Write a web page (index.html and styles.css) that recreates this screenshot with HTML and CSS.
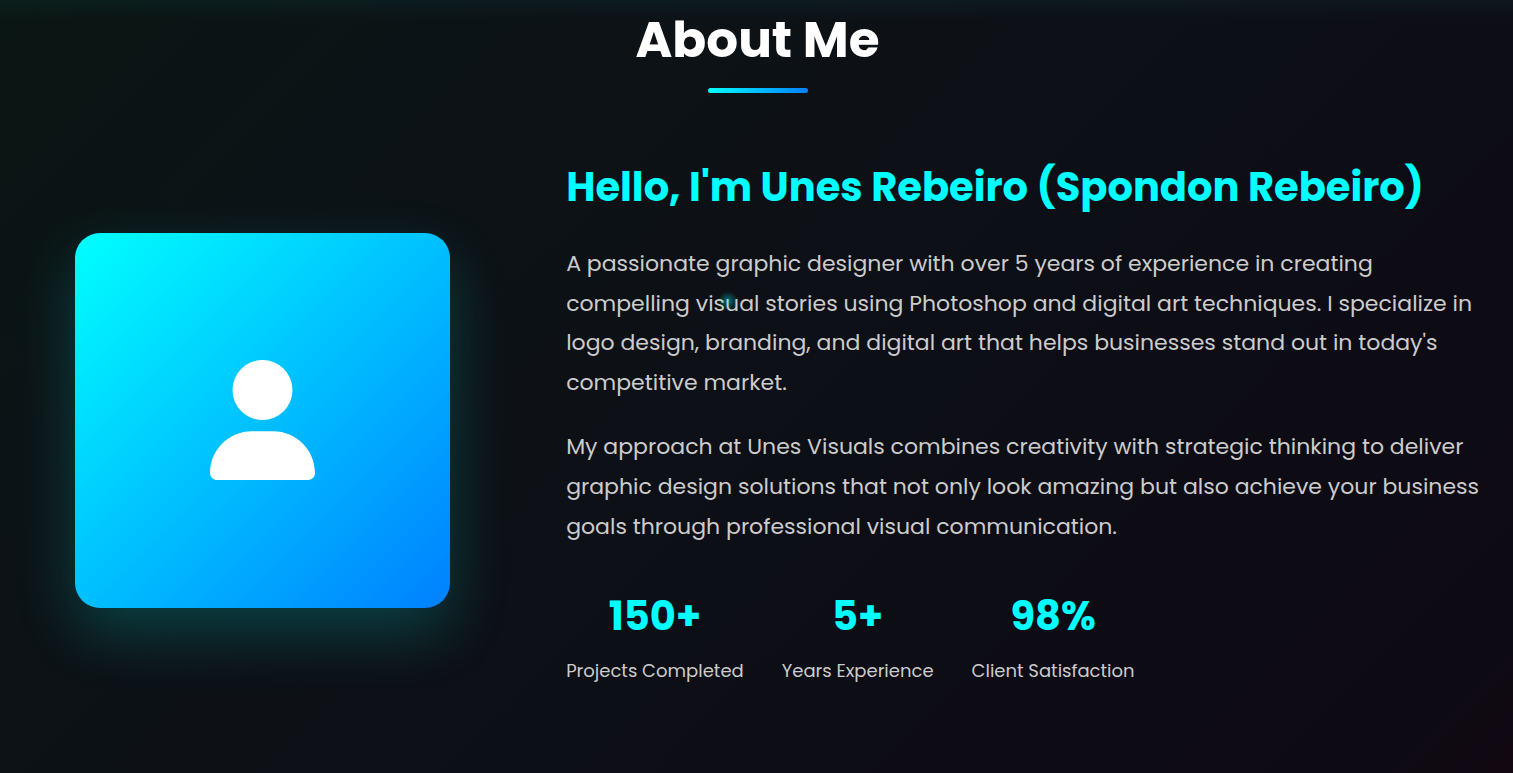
FILE: index.html
```html
<!DOCTYPE html>
<html lang="en">
<head>
<meta charset="utf-8">
<meta name="viewport" content="width=device-width, initial-scale=1">
<title>About Me</title>
<link rel="stylesheet" href="styles.css">
</head>
<body>
<section class="about" id="about">
  <div class="container">
    <h2 class="section-title">About Me</h2>
    <div class="about-content">
      <div class="about-image">
        <svg class="user-icon" viewBox="0 0 448 512" aria-hidden="true"><path d="M224 256A128 128 0 1 0 224 0a128 128 0 1 0 0 256zm-45.7 48C79.8 304 0 383.8 0 482.3C0 498.7 13.3 512 29.7 512H418.3c16.4 0 29.7-13.3 29.7-29.7C448 383.8 368.2 304 269.7 304H178.3z"/></svg>
      </div>
      <div class="about-text">
        <h3 class="greeting">Hello, I'm Unes Rebeiro (Spondon Rebeiro)</h3>
        <p class="bio">A passionate graphic designer with over 5 years of experience in creating compelling visual stories using Photoshop and digital art techniques. I specialize in logo design, branding, and digital art that helps businesses stand out in today's competitive market.</p>
        <p class="bio">My approach at Unes Visuals combines creativity with strategic thinking to deliver graphic design solutions that not only look amazing but also achieve your business goals through professional visual communication.</p>
        <div class="stats">
          <div class="stat"><span class="stat-number">150+</span><span class="stat-label">Projects Completed</span></div>
          <div class="stat"><span class="stat-number">5+</span><span class="stat-label">Years Experience</span></div>
          <div class="stat"><span class="stat-number">98%</span><span class="stat-label">Client Satisfaction</span></div>
        </div>
      </div>
    </div>
  </div>
</section>
<div class="cursor-glow" aria-hidden="true"></div>
</body>
</html>
```
FILE: styles.css
```css
* {
  box-sizing: border-box;
  margin: 0;
  padding: 0;
}

body {
  min-height: 100vh;
  background: #0a0a0f;
  color: #fff;
  font-family: Poppins, Inter, sans-serif;
}

.about {
  min-height: 100vh;
  padding: 10px 0 60px;
  background:
    linear-gradient(180deg, rgba(0, 255, 255, 0.04), rgba(0, 255, 255, 0) 20px),
    linear-gradient(135deg, #0a1613 0%, #0c1316 20%, #0d1016 50%, #0d0c15 75%, #0e0a13 94%, #120812 100%);
}

.container {
  max-width: 1500px;
  margin: 0 auto;
  padding: 0 25px 0 27px;
}

.section-title {
  display: flex;
  flex-direction: column;
  align-items: center;
  gap: 18px;
  margin-bottom: 62px;
  font-size: 50px;
  font-weight: 700;
  line-height: 60px;
}

.section-title::after {
  content: "";
  width: 100px;
  height: 5px;
  border-radius: 3px;
  background: linear-gradient(90deg, #00ffff, #0080ff);
}

.about-content {
  display: grid;
  grid-template-columns: 1fr 2fr;
  gap: 75px;
  align-items: center;
}

.about-image {
  display: flex;
  align-items: center;
  justify-content: center;
  justify-self: center;
  width: 100%;
  max-width: 375px;
  aspect-ratio: 1;
  border-radius: 25px;
  background: linear-gradient(135deg, #00ffff, #0080ff);
  box-shadow: 0 25px 62px rgba(0, 255, 255, 0.2);
}

.user-icon {
  height: 120px;
  fill: #fff;
}

.greeting {
  margin-bottom: 25px;
  color: #00ffff;
  font-size: 40px;
  font-weight: 700;
  line-height: 64px;
}

.bio {
  margin-bottom: 25px;
  color: #ccc;
  font-size: 22px;
  line-height: 1.8;
}

.stats {
  display: flex;
  flex-wrap: wrap;
  gap: 38px;
  margin-top: 38px;
}

.stat {
  display: flex;
  flex-direction: column;
  align-items: center;
}

.stat-number {
  color: #00ffff;
  font-size: 40px;
  font-weight: 700;
  line-height: 64px;
}

.stat-label {
  margin-top: 9px;
  color: #ccc;
  font-size: 18px;
  line-height: 28px;
}

.cursor-glow {
  position: absolute;
  top: 291px;
  left: 718px;
  width: 20px;
  height: 20px;
  border-radius: 50%;
  background: radial-gradient(circle, rgba(0, 255, 255, 0.4), rgba(0, 255, 255, 0) 70%);
  pointer-events: none;
}
```
